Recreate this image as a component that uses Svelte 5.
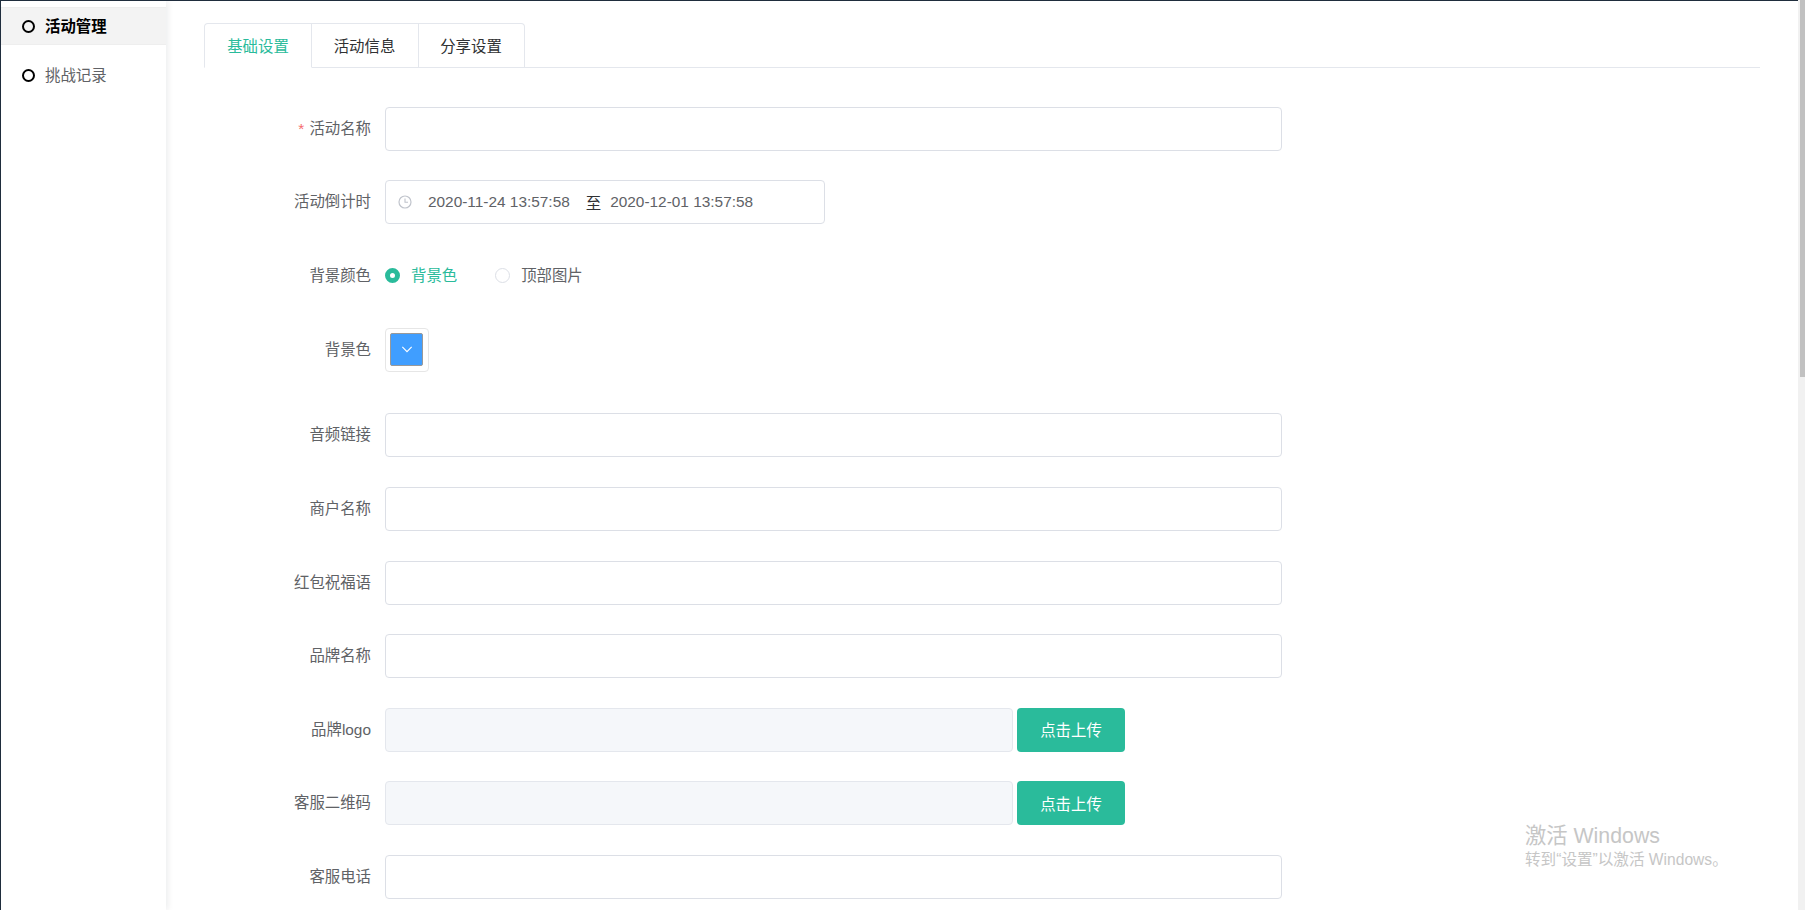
<script>
  const nav = [
    { label: '活动管理', active: true },
    { label: '挑战记录', active: false }
  ];
  const tabs = ['基础设置', '活动信息', '分享设置'];
</script>

<div class="page">
  <div class="shell">
    <aside class="sidebar">
      {#each nav as item}
        <div class="nav-item" class:active={item.active}>
          <span class="dot"></span>
          <span class="nav-text">{item.label}</span>
        </div>
      {/each}
    </aside>

    <main class="main">
      <div class="tabs">
        {#each tabs as tab, i}
          <div class="tab" class:current={i === 0}>{tab}</div>
        {/each}
      </div>

      <form class="form">
        <div class="row">
          <div class="label"><span class="req">*</span> 活动名称</div>
          <div class="input"></div>
        </div>

        <div class="row">
          <div class="label">活动倒计时</div>
          <div class="input range">
            <svg class="clock" viewBox="0 0 14 14" width="14" height="14" aria-hidden="true">
              <circle cx="7" cy="7" r="6" fill="none" stroke="#c0c4cc" stroke-width="1.2" />
              <path d="M7 3.5V7.2H10" fill="none" stroke="#c0c4cc" stroke-width="1.1" />
            </svg>
            <span class="date">2020-11-24 13:57:58</span>
            <span class="sep">至</span>
            <span class="date">2020-12-01 13:57:58</span>
          </div>
        </div>

        <div class="row radio-row">
          <div class="label">背景颜色</div>
          <div class="radios">
            <div class="radio on"><span class="circle"></span><span class="radio-text">背景色</span></div>
            <div class="radio"><span class="circle"></span><span class="radio-text">顶部图片</span></div>
          </div>
        </div>

        <div class="row picker-row">
          <div class="label">背景色</div>
          <div class="picker">
            <div class="swatch">
              <svg viewBox="0 0 12 12" width="14" height="14" aria-hidden="true">
                <path d="M2 4.2 6 8.2 10 4.2" fill="none" stroke="#fff" stroke-width="1" />
              </svg>
            </div>
          </div>
        </div>

        <div class="row"><div class="label">音频链接</div><div class="input"></div></div>
        <div class="row"><div class="label">商户名称</div><div class="input"></div></div>
        <div class="row"><div class="label">红包祝福语</div><div class="input"></div></div>
        <div class="row"><div class="label">品牌名称</div><div class="input"></div></div>

        <div class="row">
          <div class="label">品牌logo</div>
          <div class="input disabled"></div>
          <button type="button" class="upload">点击上传</button>
        </div>
        <div class="row">
          <div class="label">客服二维码</div>
          <div class="input disabled"></div>
          <button type="button" class="upload">点击上传</button>
        </div>

        <div class="row"><div class="label">客服电话</div><div class="input"></div></div>
      </form>
    </main>
  </div>

  <div class="scrollbar"><div class="thumb"></div></div>

  <div class="activation">
    <div class="a1">激活 Windows</div>
    <div class="a2">转到“设置”以激活 Windows。</div>
  </div>
</div>

<style>
  :global(html), :global(body) {
    margin: 0;
    overflow: hidden;
    background: #fff;
  }
  .page {
    position: relative;
    display: flex;
    height: 910px;
    overflow: hidden;
    font-family: "Liberation Sans", "Noto Sans CJK SC", sans-serif;
    font-size: 15.4px;
    color: #606266;
  }
  .shell {
    flex: 1;
    min-width: 0;
    display: flex;
    align-items: flex-start;
    height: 909px;
    border-top: 1px solid #1f2d3d;
    border-left: 1px solid #1f2d3d;
    overflow: hidden;
  }
  .sidebar {
    flex: none;
    width: 165px;
    height: 909px;
    padding-top: 6px;
    box-sizing: border-box;
    background: #fff;
    box-shadow: 2px 0 6px rgba(0, 21, 41, 0.08);
  }
  .nav-item {
    display: flex;
    align-items: center;
    gap: 10px;
    height: 38px;
    padding-left: 21px;
    margin-bottom: 11px;
    box-sizing: border-box;
    color: #606266;
  }
  .nav-item.active {
    background: #f3f3f3;
    border-top: 1px solid #eeeeee;
    border-bottom: 1px solid #eeeeee;
    color: #000;
    font-weight: 700;
  }
  .nav-text {
    padding-bottom: 3px;
  }
  .dot {
    width: 13px;
    height: 13px;
    border: 2px solid #000;
    border-radius: 50%;
    box-sizing: border-box;
  }
  .main {
    flex: 1;
    min-width: 0;
    padding: 22px 38px 0 38px;
  }
  .tabs {
    display: flex;
    height: 45px;
    box-sizing: border-box;
    border-bottom: 1px solid #e4e7ed;
    margin-bottom: 38.6px;
  }
  .tab {
    width: 107px;
    height: 45px;
    padding: 0 1px 2px 0;
    box-sizing: border-box;
    display: flex;
    align-items: center;
    justify-content: center;
    border: 1px solid #e4e7ed;
    border-left: 0;
    color: #303133;
  }
  .tab:first-child {
    width: 108px;
    padding-right: 0;
    border-left: 1px solid #e4e7ed;
    border-top-left-radius: 4px;
  }
  .tab:last-child {
    width: 106px;
    border-top-right-radius: 4px;
  }
  .tab.current {
    color: #2abb9b;
    border-bottom-color: #fff;
  }
  .form {
    display: flex;
    flex-direction: column;
  }
  .row {
    display: flex;
    align-items: center;
    height: 44px;
    margin-bottom: 29.6px;
  }
  .radio-row {
    margin-bottom: 30.1px;
  }
  .picker-row {
    margin-bottom: 41.5px;
  }
  .label {
    flex: none;
    width: 167px;
    margin-right: 14px;
    padding-bottom: 4px;
    text-align: right;
    white-space: nowrap;
  }
  .req {
    color: #f56c6c;
    margin-right: 1px;
  }
  .input {
    flex: none;
    width: 897px;
    height: 44px;
    box-sizing: border-box;
    background: #fff;
    border: 1px solid #dcdfe6;
    border-radius: 4px;
  }
  .input.disabled {
    width: 628px;
    background: #f5f7fa;
    border-color: #e4e7ed;
  }
  .range {
    width: 440px;
    display: flex;
    align-items: center;
    padding-left: 12px;
  }
  .clock {
    flex: none;
    margin-right: 16px;
  }
  .date {
    white-space: nowrap;
    padding-bottom: 1px;
  }
  .sep {
    margin: 0 9px 0 16px;
    color: #303133;
    padding-bottom: 1px;
  }
  .radios {
    display: flex;
    gap: 38px;
  }
  .radio {
    display: flex;
    align-items: center;
    gap: 11px;
  }
  .radio-text {
    padding-bottom: 4px;
  }
  .circle {
    width: 15px;
    height: 15px;
    box-sizing: border-box;
    border: 1px solid #dcdfe6;
    border-radius: 50%;
    background: #fff;
  }
  .radio.on {
    color: #2abb9b;
  }
  .radio.on .circle {
    border: 5px solid #2abb9b;
  }
  .picker {
    width: 44px;
    height: 44px;
    box-sizing: border-box;
    padding: 4px 5px 5px 4px;
    border: 1px solid #e6e6e6;
    border-radius: 4px;
  }
  .swatch {
    width: 100%;
    height: 100%;
    display: flex;
    align-items: center;
    justify-content: center;
    background: #409eff;
    border: 1px solid #999;
    border-radius: 2px;
    box-sizing: border-box;
  }
  .upload {
    flex: none;
    width: 108px;
    height: 44px;
    margin-left: 4px;
    padding-bottom: 2px;
    border: 0;
    border-radius: 4px;
    background: #2abb9b;
    color: #fff;
    font: inherit;
  }
  .scrollbar {
    flex: none;
    width: 7px;
    height: 910px;
    padding-left: 2px;
    box-sizing: border-box;
    background: #f1f1f1;
  }
  .thumb {
    height: 377px;
    background: #c1c1c1;
  }
  .activation {
    position: absolute;
    left: 1525px;
    top: 822px;
    color: #c6c6c6;
    white-space: nowrap;
  }
  .a1 {
    font-size: 21.3px;
    line-height: 28px;
  }
  .a2 {
    font-size: 15.6px;
    line-height: 20px;
  }
</style>
